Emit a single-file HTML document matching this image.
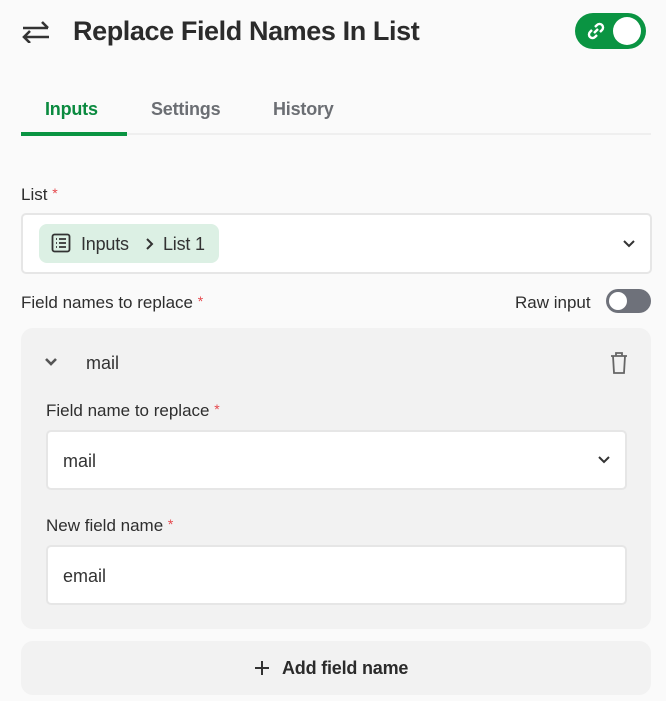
<!DOCTYPE html>
<html><head><style>
*{box-sizing:border-box;margin:0;padding:0}
body{width:666px;height:701px;background:#fafafa;font-family:"Liberation Sans",sans-serif;color:#2b2b2b;position:relative;overflow:hidden}
.a{position:absolute}
.lbl{font-size:17px;color:#2e2e2e;letter-spacing:0}
.req{color:#e5484d;font-size:14px;vertical-align:top}
.box{background:#fff;border:2px solid #e6e6e6;border-radius:5px}
</style></head><body>
<svg class="a" style="left:21px;top:21px" width="30" height="22" viewBox="0 0 30 22"><g stroke="#333" stroke-width="2.6" fill="none"><path d="M2 7H27M21 1L27 7"/><path d="M28 16H3M9 10L3 16L9 22"/></g></svg>
<div class="a" style="left:73px;top:16px;font-size:27px;font-weight:bold;color:#2b2b2b;letter-spacing:-0.4px">Replace Field Names In List</div>
<div class="a" style="left:575px;top:13px;width:71px;height:36px;border-radius:18px;background:#0a9442"></div>
<div class="a" style="left:613px;top:17px;width:28px;height:28px;border-radius:50%;background:#fff"></div>
<svg class="a" style="left:586px;top:21px" width="20" height="20" viewBox="0 0 20 20"><g stroke="#fff" stroke-width="2.4" fill="none"><path d="M8 12L12 8"/><path d="M9 6l2-2a3 3 0 0 1 5 5l-2 2"/><path d="M11 14l-2 2a3 3 0 0 1-5-5l2-2"/></g></svg>
<div class="a" style="left:45px;top:99px;font-size:18px;font-weight:bold;color:#0a8a3f;letter-spacing:-0.2px">Inputs</div>
<div class="a" style="left:151px;top:99px;font-size:18px;font-weight:bold;color:#6b6e73;letter-spacing:-0.2px">Settings</div>
<div class="a" style="left:273px;top:99px;font-size:18px;font-weight:bold;color:#6b6e73;letter-spacing:-0.2px">History</div>
<div class="a" style="left:21px;top:133px;width:630px;height:2px;background:#efefef"></div>
<div class="a" style="left:21px;top:132px;width:106px;height:4px;background:#0a9442"></div>
<div class="a lbl" style="left:21px;top:185px">List <span class="req">*</span></div>
<div class="a box" style="left:21px;top:213px;width:631px;height:61px"></div>
<div class="a" style="left:39px;top:224px;width:180px;height:39px;background:#dcf0e4;border-radius:8px"></div>
<svg class="a" style="left:51px;top:233px" width="20" height="20" viewBox="0 0 20 20"><g stroke="#333" stroke-width="1.8" fill="none"><rect x="1.5" y="1.5" width="17" height="17" rx="2"/><path d="M5 6h1M8 6h7M5 10h1M8 10h7M5 14h1M8 14h7"/></g></svg>
<div class="a" style="left:81px;top:234px;font-size:18px;color:#333;letter-spacing:-0.2px">Inputs</div>
<svg class="a" style="left:145px;top:237px" width="10" height="14"><path d="M2 2l5 5-5 5" stroke="#333" stroke-width="2" fill="none"/></svg>
<div class="a" style="left:163px;top:234px;font-size:18px;color:#333;letter-spacing:-0.2px">List 1</div>
<svg class="a" style="left:622px;top:239px" width="14" height="10"><path d="M2 2l5 5 5-5" stroke="#333" stroke-width="2" fill="none"/></svg>
<div class="a lbl" style="left:21px;top:293px">Field names to replace <span class="req">*</span></div>
<div class="a lbl" style="left:515px;top:293px">Raw input</div>
<div class="a" style="left:606px;top:289px;width:45px;height:24px;border-radius:12px;background:#6e717a"></div>
<div class="a" style="left:609px;top:292px;width:18px;height:18px;border-radius:50%;background:#fff"></div>
<div class="a" style="left:21px;top:328px;width:630px;height:301px;background:#f2f2f2;border-radius:12px"></div>
<svg class="a" style="left:44px;top:357px" width="14" height="10"><path d="M2 2l5 5 5-5" stroke="#555" stroke-width="2.6" fill="none"/></svg>
<div class="a" style="left:86px;top:353px;font-size:18px;color:#333">mail</div>
<svg class="a" style="left:609px;top:351px" width="20" height="24" viewBox="0 0 20 24"><g stroke="#666" stroke-width="1.8" fill="none"><path d="M2 5h16M7 5V2h6v3"/><path d="M4 5l1 17h10l1-17"/></g></svg>
<div class="a lbl" style="left:46px;top:401px">Field name to replace <span class="req">*</span></div>
<div class="a box" style="left:46px;top:430px;width:581px;height:60px"></div>
<div class="a" style="left:63px;top:451px;font-size:18px;color:#333">mail</div>
<svg class="a" style="left:597px;top:455px" width="14" height="10"><path d="M2 2l5 5 5-5" stroke="#333" stroke-width="2" fill="none"/></svg>
<div class="a lbl" style="left:46px;top:516px">New field name <span class="req">*</span></div>
<div class="a box" style="left:46px;top:545px;width:581px;height:60px"></div>
<div class="a" style="left:63px;top:566px;font-size:18px;color:#333">email</div>
<div class="a" style="left:21px;top:641px;width:630px;height:54px;background:#f2f2f2;border-radius:12px"></div>
<svg class="a" style="left:254px;top:660px" width="16" height="16"><path d="M8 1v14M1 8h14" stroke="#333" stroke-width="2" fill="none"/></svg>
<div class="a" style="left:282px;top:658px;font-size:18px;font-weight:bold;color:#2b2b2b;letter-spacing:-0.2px">Add field name</div>
</body></html>
